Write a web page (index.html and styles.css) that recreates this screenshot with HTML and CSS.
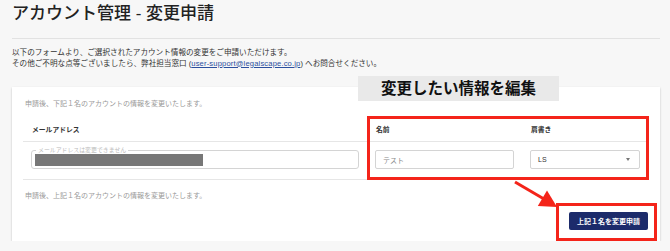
FILE: index.html
```html
<!DOCTYPE html>
<html lang="ja">
<head>
    <meta charset="UTF-8">
    <meta name="viewport" content="width=device-width, initial-scale=1.0">
    <title>アカウント管理 - 変更申請</title>
    <link rel="stylesheet" href="styles.css">
</head>
<body>
    <div class="page">
        <h1>アカウント管理 - 変更申請</h1>
        <hr class="divider">

        <p class="intro">
            以下のフォームより、ご選択されたアカウント情報の変更をご申請いただけます。<br>
            その他ご不明な点等ございましたら、弊社担当窓口 (<a href="#">user-support@legalscape.co.jp</a>) へお問合せください。
        </p>

        <div class="card">
            <p class="note">申請後、下記１名のアカウントの情報を変更いたします。</p>

            <div class="table">
                <div class="row head">
                    <div class="cell">メールアドレス</div>
                    <div class="cell">名前</div>
                    <div class="cell">肩書き</div>
                </div>
                <div class="row body">
                    <div class="cell">
                        <div class="field disabled">
                            <span class="field-label">メールアドレスは変更できません</span>
                            <span class="redacted"></span>
                        </div>
                    </div>
                    <div class="cell">
                        <div class="field">
                            <span class="value muted">テスト</span>
                        </div>
                    </div>
                    <div class="cell">
                        <div class="field select">
                            <span class="value">LS</span>
                            <span class="caret"></span>
                        </div>
                    </div>
                </div>
            </div>

            <p class="note bottom">申請後、上記１名のアカウントの情報を変更いたします。</p>

            <div class="actions">
                <button class="btn">上記１名を変更申請</button>
            </div>

            <!-- annotations -->
            <div class="tag">変更したい情報を編集</div>
            <div class="mark mark-fields"></div>
            <div class="mark mark-button"></div>
            <svg class="arrow" width="60" height="36" viewBox="0 0 60 36">
                <line x1="3" y1="3" x2="32" y2="20" stroke="#f4241a" stroke-width="3"/>
                <polygon points="45,28 25.8,27 35,11.6" fill="#f4241a"/>
            </svg>
        </div>
    </div>
</body>
</html>
```

FILE: styles.css
```css
body {
    margin: 0;
    background-color: #f7f7f7;
    font-family: "Liberation Sans", "Noto Sans CJK JP", sans-serif;
    color: #222;
}

.page {
    padding: 0 10px 0 12px;
}

h1 {
    margin: 0;
    font-size: 17px;
    line-height: 27px;
    font-weight: 500;
    color: #222;
}

.divider {
    margin: 11px 0 0;
    border: none;
    border-top: 1px solid #e2e2e2;
}

.intro {
    margin: 9px 0 0;
    font-size: 7.6px;
    line-height: 10.5px;
    color: #333;
}

.intro a {
    color: #2b4f9e;
    letter-spacing: 0.15px;
}

.card {
    position: relative;
    margin-top: 18px;
    padding: 12px 12px 11px 11px;
    background-color: #fff;
    box-shadow: 0 1px 2px rgba(0, 0, 0, 0.22);
}

.note {
    margin: 0;
    padding-left: 2px;
    font-size: 7px;
    line-height: 10px;
    color: #999;
}

.note.bottom {
    margin-top: 11px;
}

.table {
    margin-top: 7px;
}

.row {
    display: grid;
    grid-template-columns: 344px 155px 1fr;
    border-bottom: 1px solid #e6e6e6;
}

.row.head {
    height: 25px;
    align-items: center;
    font-size: 6.8px;
    font-weight: 700;
    color: #333;
}

.row.head .cell {
    padding-left: 9px;
}

.row.body {
    height: 37px;
}

.row.body .cell {
    padding: 8px 8px 0;
}

.field {
    position: relative;
    box-sizing: border-box;
    height: 19px;
    display: flex;
    align-items: center;
    padding: 0 7px;
    border: 1px solid #d4d4d4;
    border-radius: 2px;
    font-size: 7px;
}

.field.disabled {
    padding: 0 3px;
    border-radius: 3px;
}

.field-label {
    position: absolute;
    top: -4px;
    left: 4px;
    padding: 0 2px;
    background-color: #fff;
    font-size: 5.9px;
    line-height: 7px;
    color: #bbb;
}

.redacted {
    display: block;
    width: 168px;
    height: 12px;
    background-color: #777;
}

.value {
    color: #333;
}

.value.muted {
    color: #888;
}

.select {
    justify-content: space-between;
}

.caret {
    width: 0;
    height: 0;
    margin-right: 2px;
    border-left: 2.5px solid transparent;
    border-right: 2.5px solid transparent;
    border-top: 3px solid #777;
}

.actions {
    display: flex;
    justify-content: flex-end;
    margin-top: 11px;
}

.btn {
    height: 18px;
    width: 79px;
    padding: 0;
    background-color: #1c2b6b;
    color: #fff;
    border: none;
    border-radius: 2px;
    font-family: inherit;
    font-size: 7px;
    font-weight: 700;
    cursor: pointer;
}

.tag {
    position: absolute;
    top: -11px;
    left: 346px;
    width: 201px;
    height: 25px;
    background-color: #e9e9e9;
    font-size: 15.5px;
    font-weight: 700;
    line-height: 25px;
    text-align: center;
    color: #111;
}

.mark {
    position: absolute;
    box-sizing: border-box;
    border: 3px solid #f4241a;
}

.mark-fields {
    top: 29px;
    left: 355px;
    width: 282px;
    height: 64px;
}

.mark-button {
    top: 116px;
    left: 544px;
    width: 101px;
    height: 38px;
}

.arrow {
    position: absolute;
    top: 92px;
    left: 500px;
}
```
